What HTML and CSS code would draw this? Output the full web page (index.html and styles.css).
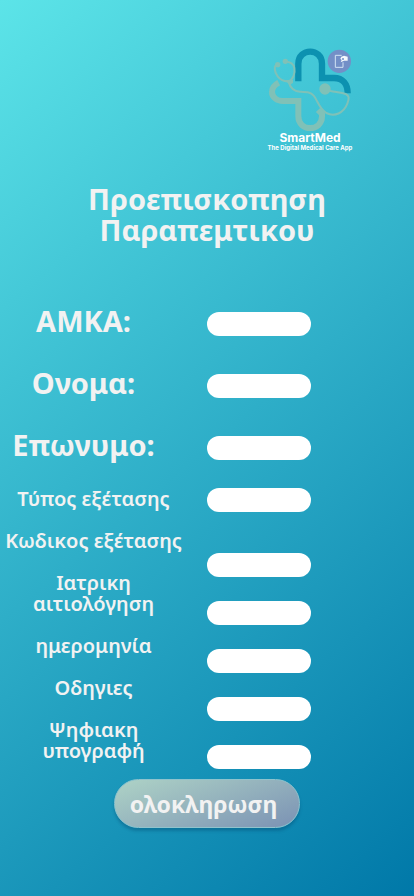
FILE: index.html
```html
<!DOCTYPE html>
<html lang="el">
<head>
<meta charset="utf-8">
<meta name="viewport" content="width=device-width, initial-scale=1">
<title>SmartMed</title>
<link rel="stylesheet" href="styles.css">
</head>
<body>
<header class="brand">
  <svg class="brand-mark" viewBox="0 0 300 276" aria-hidden="true">
    <g fill="none" stroke="#80c1b7" stroke-width="18">
      <path d="M56 128C41 136 36 146 36 156C36 172 51 183 69 183H115V229C115 276 186 276 186 229V222L174 210"/>
    </g>
    <path d="M115 124V71C115 23 186 23 186 71V114H222C248 114 263 132 263 160" fill="none" stroke="#0c91b0" stroke-width="19"/>
    <g fill="none" stroke="#80c1b7" stroke-width="6" stroke-linecap="round">
      <path d="M53 73C40 76 43 96 53 109C61 119 73 125 86 124C99 119 106 101 103 84C101 72 91 65 76 65"/>
      <path d="M86 126C91 145 105 154 120 155C143 156 151 156 161 167C173 181 177 206 199 219C223 231 251 220 262 191C268 175 268 167 257 162C239 155 215 157 196 148"/>
    </g>
    <path d="M76 120H99V128L89 136Z" fill="#80c1b7"/>
    <g fill="#80c1b7">
      <circle cx="53" cy="74" r="8"/>
      <circle cx="76" cy="64" r="8"/>
      <circle cx="195" cy="147" r="17"/>
    </g>
    <circle cx="238" cy="64" r="35" fill="#738fc7"/>
    <path d="M245 46H226V82H249V67" fill="none" stroke="#d3e3f3" stroke-width="3"/>
    <path d="M244 50L252 47L263 50V62H252L242 67L245 60L241 56Z" fill="#f4f8fc"/>
    <circle cx="249" cy="57" r="3" fill="#738fc7"/>
  </svg>
  <p class="brand-name">SmartMed</p>
  <p class="brand-tagline">The Digital Medical Care App</p>
</header>
<main>
  <h1 class="title">Προεπισκοπηση Παραπεμτικου</h1>
  <form>
    <section class="group patient">
      <div class="labels">
        <label for="amka">ΑΜΚΑ:</label>
        <label for="first-name">Ονομα:</label>
        <label for="last-name">Επωνυμο:</label>
      </div>
      <div class="fields">
        <input id="amka" type="text">
        <input id="first-name" type="text">
        <input id="last-name" type="text">
      </div>
    </section>
    <section class="group exam">
      <div class="labels">
        <label for="exam-type">Τύπος εξέτασης</label>
        <label for="exam-code">Κωδικος εξέτασης</label>
        <label for="reason">Ιατρικη<br>αιτιολόγηση</label>
        <label for="date">ημερομηνία</label>
        <label for="notes">Οδηγιες</label>
        <label for="signature">Ψηφιακη<br>υπογραφή</label>
      </div>
      <div class="fields">
        <input id="exam-type" type="text">
        <input id="exam-code" type="text">
        <input id="reason" type="text">
        <input id="date" type="text">
        <input id="notes" type="text">
        <input id="signature" type="text">
      </div>
    </section>
    <button class="submit" type="submit">ολοκληρωση</button>
  </form>
</main>
</body>
</html>
```
FILE: styles.css
```css
* {
  box-sizing: border-box;
}

body {
  margin: 0;
  min-height: 100vh;
  padding-top: 40px;
  background: linear-gradient(140deg, #5ce4e8 0%, #0078a8 100%);
  color: #f2f2f2;
  font-family: "Noto Sans", sans-serif;
  font-weight: 700;
}

.brand {
  display: flex;
  flex-direction: column;
  align-items: center;
  width: 100px;
  margin: 0 54px 0 auto;
  color: #fff;
  font-family: Inter, sans-serif;
  white-space: nowrap;
}

.brand-mark {
  display: block;
  width: 100%;
}

.brand-name,
.brand-tagline {
  margin: 0;
}

.brand-name {
  font-size: 12px;
  line-height: 12px;
}

.brand-tagline {
  font-size: 6px;
  line-height: 8px;
}

.title {
  max-width: 260px;
  margin: 31px auto 0;
  font-size: 29px;
  line-height: 31px;
  text-align: center;
}

.group {
  display: grid;
  grid-template-columns: 50% 25%;
}

.labels,
.fields {
  display: flex;
  flex-direction: column;
}

.labels {
  text-align: center;
}

.patient {
  margin-top: 60px;
}

.patient .labels {
  gap: 31px;
  padding-right: 40px;
  font-size: 29px;
  line-height: 31px;
}

.patient .fields {
  gap: 38px;
  padding-top: 7px;
}

.exam {
  margin-top: 28px;
}

.exam .labels {
  gap: 21px;
  padding-right: 20px;
  font-size: 20px;
  font-weight: 600;
  line-height: 21px;
}

.exam .fields {
  gap: 24px;
}

.exam .fields input:first-child {
  margin-bottom: 17px;
}

input {
  width: 100%;
  height: 24px;
  padding: 0 12px;
  border: 0;
  border-radius: 12px;
  background: #fff;
  font: inherit;
  font-size: 14px;
}

.submit {
  display: block;
  height: 49px;
  margin: 10px auto 20px;
  padding: 0 22px 0 15px;
  border: 1px solid #8fc3cd;
  border-radius: 25px;
  background: linear-gradient(160deg, #aed3c6 0%, #7b92b4 100%);
  box-shadow: 0 3px 3px rgba(0, 60, 100, 0.3);
  color: #f2f2f2;
  font: inherit;
  font-size: 23px;
  line-height: 44px;
}
```
